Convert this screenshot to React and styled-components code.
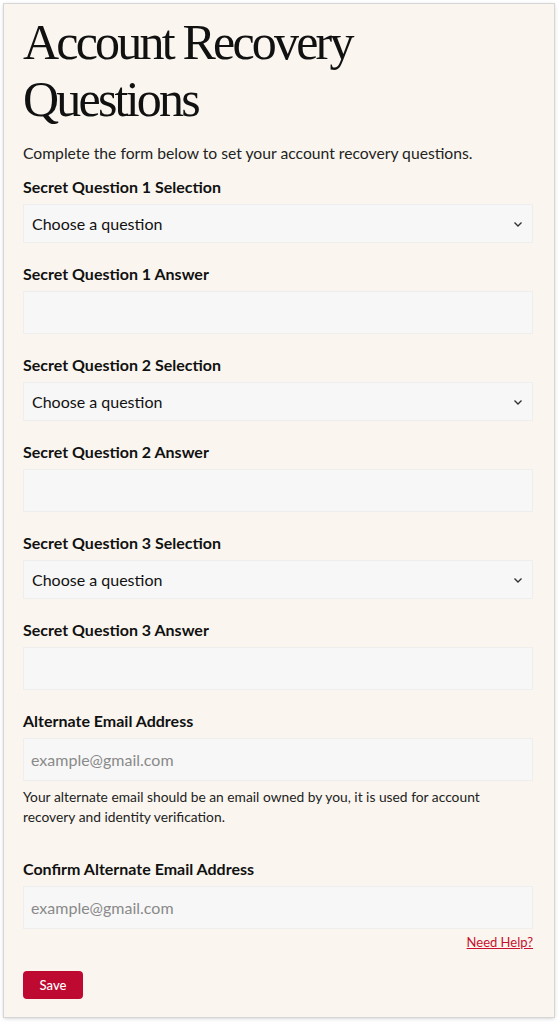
import React from "react";
import styled, { createGlobalStyle } from "styled-components";

const Global = createGlobalStyle`
  html, body { margin: 0; padding: 0; background: #ffffff; }
  body { font-family: Lato, "Liberation Sans", sans-serif; color: #111; }
  * { box-sizing: border-box; }
`;

const Page = styled.div`
  padding: 4px 5px 6px 4px;
`;

const Card = styled.div`
  background: #faf6ef;
  box-shadow: 0 0 0 1px #d6d6d6, 0 1px 4px rgba(0, 0, 0, 0.25);
  padding: 10px 21px 18px 19px;
  display: flex;
  flex-direction: column;
`;

const Title = styled.h1`
  margin: 0;
  font-family: "Liberation Serif", "Times New Roman", serif;
  font-weight: 400;
  font-size: 50px;
  line-height: 57px;
  letter-spacing: -2.8px;
  color: #111;
`;

const Intro = styled.p`
  margin: 14px 0 0;
  font-size: 15.7px;
  line-height: 22px;
  color: #222;
`;

const Field = styled.div`
  display: flex;
  flex-direction: column;
  gap: 7px;
  margin-top: ${(p) => p.$top}px;
`;

const Label = styled.label`
  font-size: 16px;
  font-weight: 700;
  line-height: 20px;
  color: #111;
`;

const SelectBox = styled.div`
  height: 39px;
  background: #f7f7f7;
  border: 1px solid #eeeeee;
  display: flex;
  align-items: center;
  padding: 0 8px;
  font-size: 16px;
  color: #111;
`;

const Chevron = styled.svg`
  margin-left: auto;
  width: 12px;
  height: 12px;
`;

const Input = styled.input`
  height: 43px;
  background: #f7f7f7;
  border: 1px solid #eeeeee;
  padding: 0 7px;
  font-family: inherit;
  font-size: 16px;
  color: #111;
  outline: none;
  &::placeholder { color: #8a8a8a; }
`;

const Help = styled.p`
  margin: 6px 0 0;
  font-size: 13.8px;
  line-height: 20px;
  color: #222;
`;

const HelpRow = styled.div`
  display: flex;
  justify-content: flex-end;
  margin-top: 4px;
`;

const HelpLink = styled.a`
  font-size: 13px;
  line-height: 18px;
  color: #c8102e;
  text-decoration: underline;
`;

const SaveButton = styled.button`
  align-self: flex-start;
  margin-top: 20px;
  width: 60px;
  height: 28px;
  border: none;
  border-radius: 4px;
  background: #be0a30;
  color: #fff;
  font-family: inherit;
  font-size: 13px;
  font-weight: 500;
`;

function SelectField({ label, top }) {
  return (
    <Field $top={top}>
      <Label>{label}</Label>
      <SelectBox>
        Choose a question
        <Chevron viewBox="0 0 12 12" fill="none" stroke="#333" strokeWidth="1.4">
          <path d="M2.5 4.5 L6 8 L9.5 4.5" />
        </Chevron>
      </SelectBox>
    </Field>
  );
}

function InputField({ label, top, placeholder }) {
  return (
    <Field $top={top}>
      <Label>{label}</Label>
      <Input placeholder={placeholder} />
    </Field>
  );
}

export default function App() {
  return (
    <>
      <Global />
      <Page>
        <Card>
          <Title>Account Recovery Questions</Title>
          <Intro>Complete the form below to set your account recovery questions.</Intro>
          <SelectField label="Secret Question 1 Selection" top={13} />
          <InputField label="Secret Question 1 Answer" top={21} />
          <SelectField label="Secret Question 2 Selection" top={21} />
          <InputField label="Secret Question 2 Answer" top={21} />
          <SelectField label="Secret Question 3 Selection" top={21} />
          <InputField label="Secret Question 3 Answer" top={21} />
          <InputField label="Alternate Email Address" top={21} placeholder="example@gmail.com" />
          <Help>
            Your alternate email should be an email owned by you, it is used for account recovery and identity verification.
          </Help>
          <InputField label="Confirm Alternate Email Address" top={32} placeholder="example@gmail.com" />
          <HelpRow>
            <HelpLink href="#">Need Help?</HelpLink>
          </HelpRow>
          <SaveButton>Save</SaveButton>
        </Card>
      </Page>
    </>
  );
}
